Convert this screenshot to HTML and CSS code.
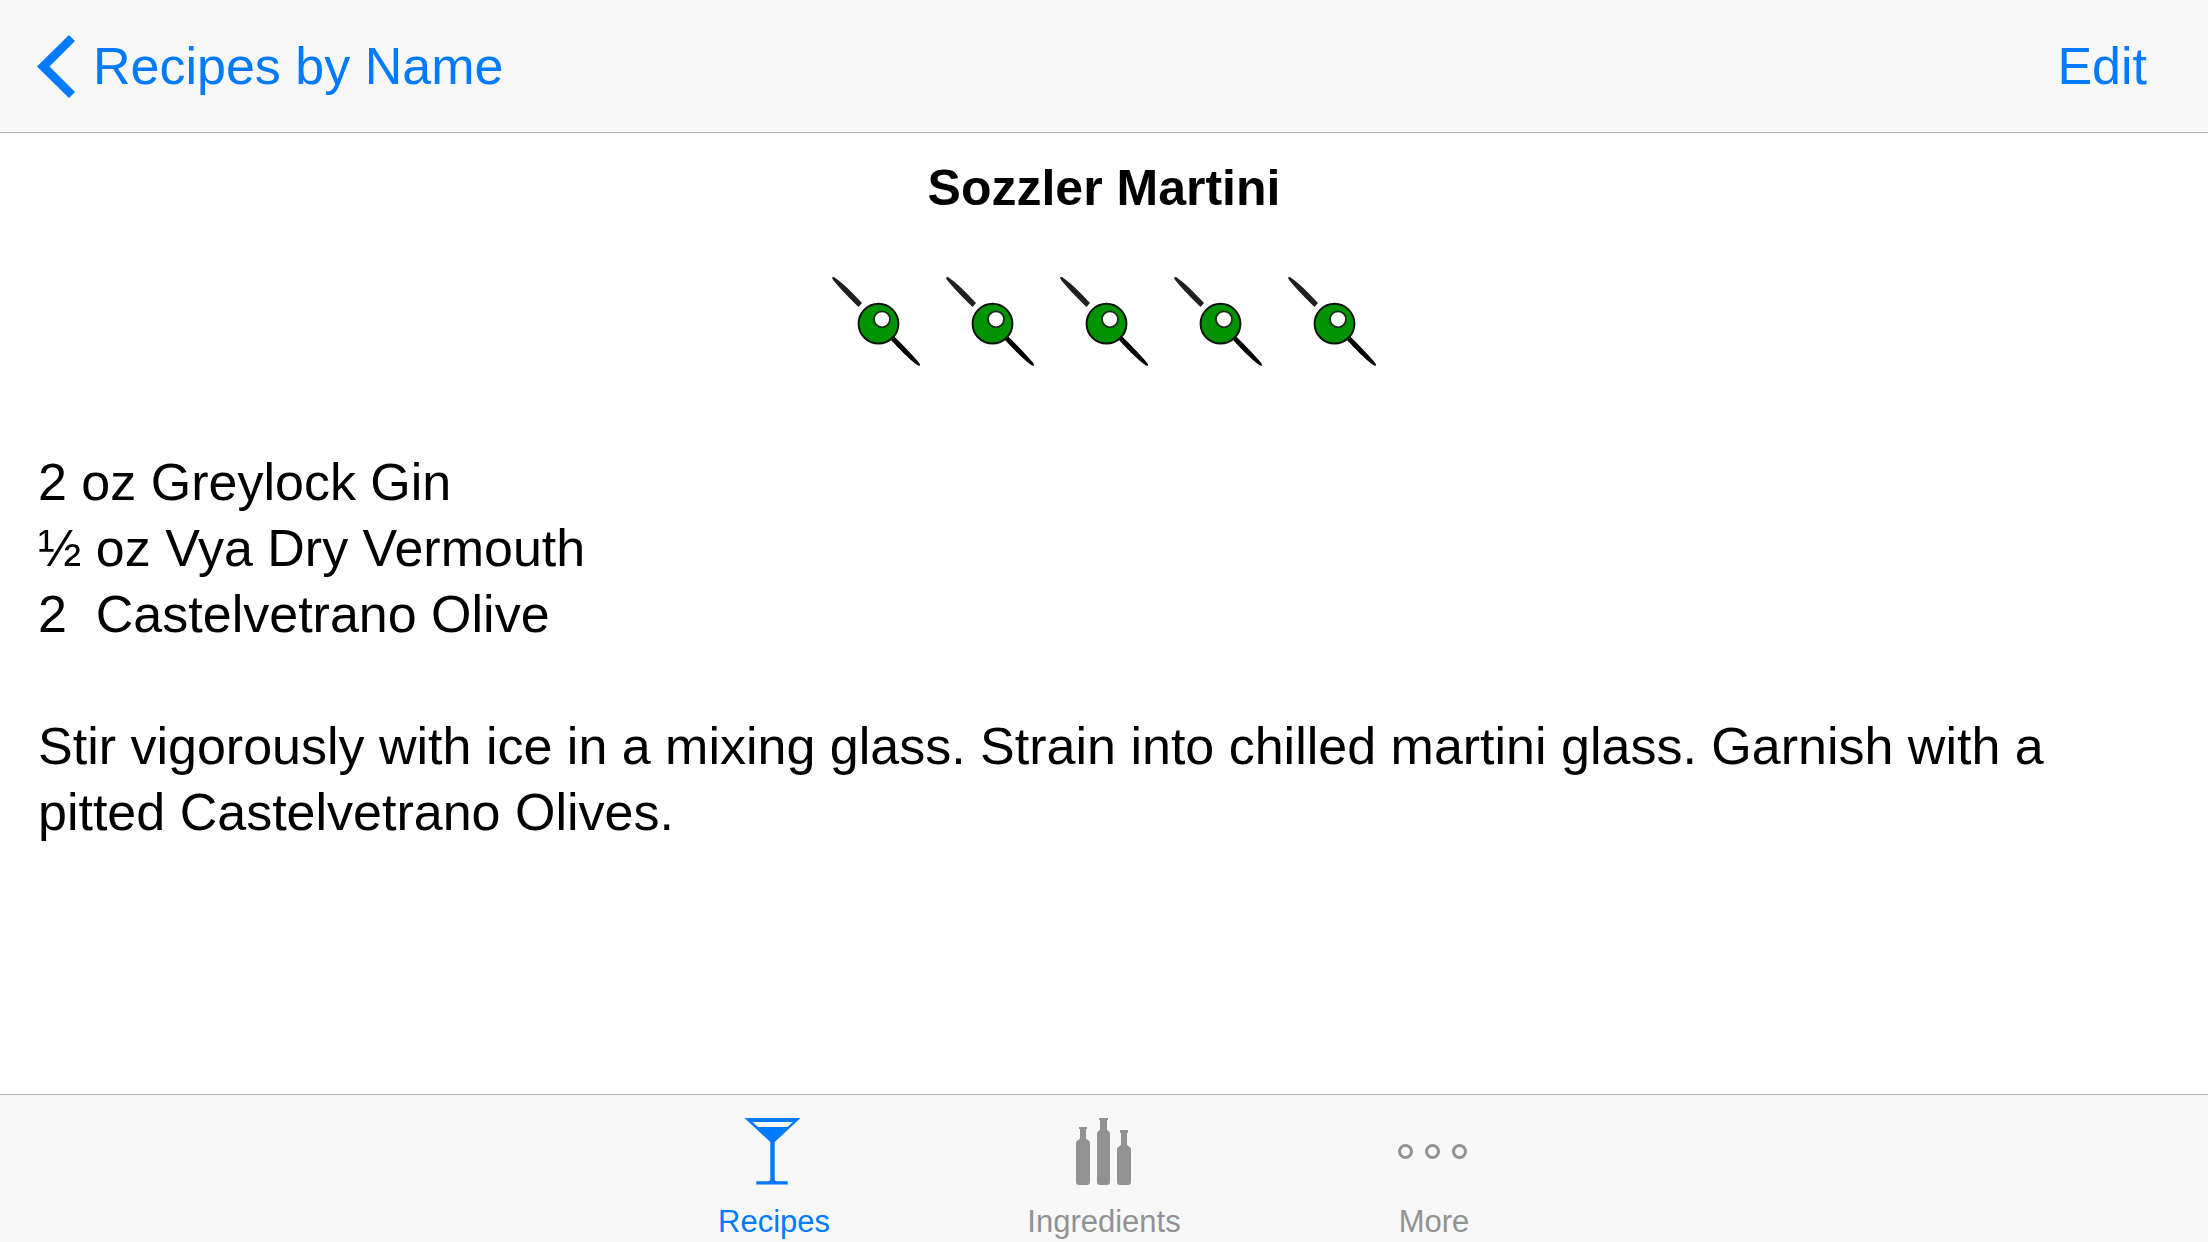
FILE: index.html
```html
<!DOCTYPE html>
<html lang="en">
<head>
<meta charset="utf-8">
<meta name="viewport" content="width=device-width, initial-scale=1">
<title>Sozzler Martini</title>
<link rel="stylesheet" href="styles.css">
</head>
<body>
<svg class="sprite" aria-hidden="true">
  <symbol id="olive" viewBox="0 0 90 90">
    <path d="M1.200 1.200 Q2.600 .4 5 2.400 Q14 8.500 31 27 L27.500 31 Q10 14 2.500 4.500 Q.6 2.200 1.200 1.200Z" fill="#231f20"/>
    <path d="M60 64 L63.500 60.700 Q80 77 88 86.800 Q89.500 89 88.700 89.700 Q87.500 90.200 84.500 87.800 Q75 80.500 60 64Z"/>
    <circle cx="47.500" cy="47.700" r="19.900" fill="#009300" stroke="#111" stroke-width="2"/>
    <circle cx="51" cy="43.300" r="8" fill="#fff" stroke="#1c2b1c" stroke-width="1.800"/>
  </symbol>
</svg>
<div class="app">
  <header class="navbar">
    <button class="nav-button" type="button">
      <svg class="chevron" viewBox="0 0 38 63" aria-hidden="true"><path d="M32 0 L38 6 L12.500 31.500 L38 57 L32 63 L0 31.500Z" fill="currentColor"/></svg>
      Recipes by Name
    </button>
    <button class="nav-button" type="button">Edit</button>
  </header>
  <main class="recipe">
    <h1 class="title">Sozzler Martini</h1>
    <div class="rating" role="img" aria-label="5 olives">
      <svg class="olive"><use href="#olive"/></svg>
      <svg class="olive"><use href="#olive"/></svg>
      <svg class="olive"><use href="#olive"/></svg>
      <svg class="olive"><use href="#olive"/></svg>
      <svg class="olive"><use href="#olive"/></svg>
    </div>
    <ul class="ingredients">
      <li>2 oz Greylock Gin</li>
      <li>½ oz Vya Dry Vermouth</li>
      <li>2  Castelvetrano Olive</li>
    </ul>
    <p class="directions">Stir vigorously with ice in a mixing glass. Strain into chilled martini glass. Garnish with a pitted Castelvetrano Olives.</p>
  </main>
  <nav class="tabbar">
    <a class="tab active" href="#recipes" aria-current="page">
      <svg class="tab-icon" viewBox="0 0 70 68" aria-hidden="true"><path fill="currentColor" fill-rule="evenodd" d="M5.500 1 H61.500 L35.700 25 V62.500 Q35.700 64.300 38 64.300 H48.700 V67.500 H17.300 V64.300 H29 Q31.300 64.300 31.300 62.500 V25Z M13.500 5 L19 10 H48.300 L54 5Z"/></svg>
      Recipes
    </a>
    <a class="tab" href="#ingredients">
      <svg class="tab-icon" viewBox="0 0 70 68" aria-hidden="true"><g fill="currentColor">
        <path d="M10 10 H18 V12 H17 V21 Q17 22.500 19 23 Q21 24 21 26 V65 Q21 68 18 68 H10 Q7 68 7 65 V26 Q7 24 9 23 Q11 22.500 11 21 V12 H10Z"/>
        <path d="M30 1 H39 V3 H38 V12 Q38 13.500 39.500 14 Q41 15 41 17 V65 Q41 68 38 68 H31 Q28 68 28 65 V17 Q28 15 29.500 14 Q31 13.500 31 12 V3 H30Z"/>
        <path d="M51 13 H59 V16 H58 V27 Q58 28.500 60 29.500 Q62 30.500 62 32 V65 Q62 68 59 68 H51 Q48 68 48 65 V32 Q48 30.500 50 29.500 Q52 28.500 52 27 V16 H51Z"/>
      </g></svg>
      Ingredients
    </a>
    <a class="tab" href="#more">
      <svg class="tab-icon" viewBox="0 0 70 68" aria-hidden="true"><g fill="none" stroke="currentColor" stroke-width="3"><circle cx="6.500" cy="34.500" r="6"/><circle cx="33.500" cy="34.500" r="6"/><circle cx="60.500" cy="34.500" r="6"/></g></svg>
      More
    </a>
  </nav>
</div>
</body>
</html>
```
FILE: styles.css
```css
* {
  box-sizing: border-box;
}

body {
  margin: 0;
  background: #fff;
  color: #000;
  font: 52px/66px "Liberation Sans", Arial, sans-serif;
}

.sprite {
  position: absolute;
  width: 0;
  height: 0;
}

.app {
  display: flex;
  flex-direction: column;
  min-height: 100vh;
}

.navbar {
  display: flex;
  align-items: center;
  justify-content: space-between;
  padding: 33px 61px 33px 37px;
  background: #f8f8f8;
  border-bottom: 1px solid #b2b2b2;
}

.nav-button {
  display: flex;
  align-items: center;
  gap: 18px;
  padding: 0;
  border: 0;
  background: none;
  color: #007aff;
  font: inherit;
}

.chevron {
  width: 38px;
  height: 63px;
}

.recipe {
  flex: 1;
  padding: 22px 38px 66px;
}

.title {
  margin: 0;
  font-size: 50px;
  line-height: 66px;
  text-align: center;
}

.rating {
  display: flex;
  justify-content: center;
  gap: 24px;
  margin: 55px 0 83px;
}

.olive {
  width: 90px;
  height: 90px;
}

.ingredients {
  margin: 0 0 66px;
  padding: 0;
  list-style: none;
}

.ingredients li {
  white-space: pre-wrap;
}

.directions {
  margin: 0;
}

.tabbar {
  display: flex;
  justify-content: center;
  background: #f8f8f8;
  border-top: 1px solid #b2b2b2;
}

.tab {
  display: flex;
  flex-direction: column;
  align-items: center;
  gap: 19px;
  width: 330px;
  padding: 22px 0 2px;
  color: #929292;
  font-size: 31px;
  line-height: 36px;
  text-decoration: none;
}

.tab.active {
  color: #007aff;
}

.tab-icon {
  width: 70px;
  height: 68px;
  overflow: visible;
}
```
